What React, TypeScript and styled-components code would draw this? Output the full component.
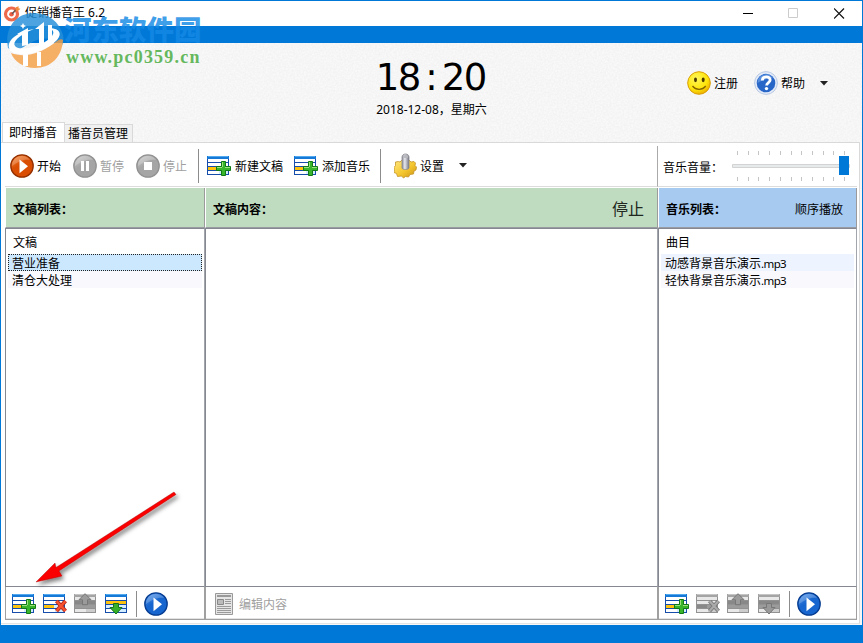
import React from "react";
import styled, { createGlobalStyle } from "styled-components";

const GlobalStyle = createGlobalStyle`
  * { box-sizing: border-box; }
  body { margin: 0; overflow: hidden; }
  svg { display: block; flex: none; }
`;

const noise =
  "url(\"data:image/svg+xml,%3Csvg xmlns='http://www.w3.org/2000/svg' width='200' height='100'%3E%3Cfilter id='n'%3E%3CfeTurbulence type='fractalNoise' baseFrequency='0.55' numOctaves='2' stitchTiles='stitch'/%3E%3CfeColorMatrix values='0 0 0 0 0.5 0 0 0 0 0.5 0 0 0 0 0.5 0.22 0 0 0 -0.06'/%3E%3C/filter%3E%3Crect width='200' height='100' filter='url(%23n)'/%3E%3C/svg%3E\")";

const Window = styled.div`
  position: relative;
  width: 863px;
  height: 643px;
  display: flex;
  flex-direction: column;
  border: 1px solid #0078d7;
  border-bottom: 0;
  background: #0078d7;
  color: #000;
  font: 12px/16px "Noto Sans", "Noto Sans CJK SC", sans-serif;
  white-space: nowrap;
  overflow: hidden;
`;
const TitleBar = styled.div`
  height: 25px;
  flex: none;
  display: flex;
  align-items: center;
  background: #fff;
  padding-left: 2px;
`;
const TitleText = styled.span`
  flex: 1;
  margin: -1px 0 0 4px;
`;
const Controls = styled.div`
  display: flex;
  gap: 35px;
  margin-right: 17px;
`;
const Band = styled.div`
  height: 17px;
  flex: none;
`;
const Header = styled.div`
  height: 99px;
  flex: none;
  display: grid;
  grid-template-columns: 1fr 114px 1fr;
  background: #f9f9f9 ${noise};
`;
const TabStrip = styled.div`
  display: flex;
  align-items: flex-end;
  padding-left: 1px;
`;
const Tab = styled.div<{ $active?: boolean }>`
  width: ${(p) => (p.$active ? 63 : 68)}px;
  height: ${(p) => (p.$active ? 20 : 18)}px;
  padding: ${(p) => (p.$active ? "2px 0 0 6px" : "1px 0 0 3px")};
  border: 1px solid #d9d9d9;
  border-bottom: 0;
  border-left-width: ${(p) => (p.$active ? 1 : 0)}px;
  background: ${(p) => (p.$active ? "#fff" : "#f0f0f0")};
`;
const Clock = styled.div`
  padding-top: 10px;
  text-align: center;
`;
const Digits = styled.div`
  display: flex;
  justify-content: center;
  font: 37px/49px "DejaVu Sans", sans-serif;
`;
const Digit = styled.span`
  width: 22px;
  display: flex;
  justify-content: center;
`;
const HeaderActions = styled.div`
  display: flex;
  align-items: center;
  justify-content: flex-end;
  height: 80px;
  padding-right: 34px;
`;
const Action = styled.div<{ $disabled?: boolean; $gap?: number; $after?: number }>`
  display: flex;
  align-items: center;
  gap: ${(p) => p.$gap ?? 3}px;
  margin-right: ${(p) => p.$after ?? 12}px;
  color: ${(p) => (p.$disabled ? "#a0a0a0" : "#000")};
`;
const Label = styled.span`
  padding-top: 2px;
`;
const PageFrame = styled.div`
  background: #f7f7f7;
  height: 483px;
  flex: none;
`;
const Page = styled.div`
  height: 482px;
  display: grid;
  grid-template-columns: 200px 453px 199px;
  grid-template-rows: 45px 40px 359px 33px;
  padding-left: 4px;
  margin-right: 2px;
  border-top: 1px solid #d9d9d9;
  border-right: 1px solid #d9d9d9;
  border-bottom: 1px solid #e4e4e4;
  background: #fff;
`;
const Toolbar = styled.div`
  grid-column: 1 / 3;
  display: flex;
  align-items: center;
  padding: 2px 0 0 5px;
  border-bottom: 1px solid #dcdcdc;
  margin-bottom: 1px;
`;
const Separator = styled.i<{ $height: number; $after: number }>`
  width: 1px;
  height: ${(p) => p.$height}px;
  margin-right: ${(p) => p.$after}px;
  background: #8c8c8c;
`;
const Volume = styled.div`
  display: flex;
  align-items: center;
  border-left: 1px solid #aaa;
  margin: 3px 0 1px -1px;
  border-bottom: 1px solid #dcdcdc;
  padding-left: 5px;
`;
const VolumeLabel = styled.span`
  width: 69px;
  padding-top: 3px;
`;
const PanelHead = styled.div<{ $tone: string }>`
  display: flex;
  align-items: center;
  justify-content: space-between;
  padding: 4px 13px 0 7px;
  background: ${(p) => p.$tone};
  border-right: 1px solid #9b9b9b;
  border-left: 1px solid #fff;
  border-bottom: 1px solid #999ba2;
`;
const State = styled.span`
  font-size: 16px;
  line-height: 20px;
  margin-top: -2px;
  color: #202820;
`;
const Panel = styled.div`
  border: 1px solid #858891;
  border-right-color: #a3a5ad;
  background: #fff;
  padding: 5px 2px 0 2px;
`;
const ColumnTitle = styled.div`
  height: 20px;
  padding: 1px 0 0 5px;
`;
const ListRow = styled.div<{ $selected?: boolean; $tint: string }>`
  height: 17px;
  line-height: 19px;
  padding-left: 4px;
  background: ${(p) => p.$tint};
  outline: ${(p) => (p.$selected ? "1px dotted #222" : "none")};
  outline-offset: -1px;
`;
const Extension = styled.span`
  font-size: 11.5px;
  letter-spacing: -0.6px;
`;
const Footer = styled.div`
  display: flex;
  align-items: center;
  padding: 1px 0 0 6px;
  border: 1px solid #a0a0a0;
  border-top: 0;
  box-shadow: inset 0 -1px #e3e3e3;
`;
const FooterIcon = styled.div`
  width: 31px;
`;
const FooterDoc = styled.div`
  padding-left: 3px;
`;
const Watermark = styled.div`
  position: absolute;
  left: 4px;
  top: 9px;
  width: 200px;
  height: 62px;
`;
const WatermarkName = styled.div`
  position: absolute;
  left: 59px;
  top: 2px;
  font: 900 27.5px/32px "Noto Sans CJK SC", sans-serif;
  color: rgba(20, 137, 229, 0.82);
`;
const WatermarkUrl = styled.div`
  position: absolute;
  left: 61px;
  top: 36px;
  font: bold 18px/22px "Liberation Serif", serif;
  letter-spacing: 1.2px;
  color: #65b85d;
`;
const Arrow = styled.svg`
  position: absolute;
  left: 28px;
  top: 484px;
`;

function AppIcon() {
  return (
    <svg width="18" height="18" viewBox="0 0 18 18">
      <circle cx="8.5" cy="9" r="6" fill="#fff" stroke="#ed6a4d" strokeWidth="3.2" />
      <circle cx="8.5" cy="9.2" r="2.3" fill="#ed5c42" />
      <path d="M9 9 14 3.5" stroke="#6b5450" strokeWidth="1.6" />
      <path d="m12.7 2.3 3.1-1-.4 2 2 .5-2.7 2.5-2.4-1Z" fill="#f18a3b" />
    </svg>
  );
}

function ListIcon({ mode, gray }: { mode: "plus" | "cross" | "up" | "down"; gray?: boolean }) {
  const edge = gray ? "#929292" : "#174daa";
  const accent = gray ? "#888" : "#ffc20d";
  const upDown = mode === "up" || mode === "down";
  return (
    <svg width="25" height="22" viewBox="0 0 25 22">
      <path d="M0 1h22v19H0z" fill={edge} />
      <path d="M0 1h22v3H0z" fill={gray ? "#a4a4a4" : "#1679d8"} />
      <path d="M1 1h20v1H1z" fill={gray ? "#c5c5c5" : "#53a9ee"} />
      <path d="M1 4h20v3H1zM1 8h20v3H1zM1 16h20v3H1z" fill={gray ? "#e8e8e8" : "#fff"} />
      <path d="M1 12h20v3H1z" fill={gray ? "#9b9b9b" : "#d9efff"} />
      {upDown ? <path d="M1 8h20v3H1z" fill={accent} /> : <path d="M1 12h10v3H1z" fill={accent} />}
      <path d="M12 16h9v3h-9z" fill={gray ? "#ccc" : "#d1edff"} />
      {mode === "plus" && (
        <>
          <path d="M14.5 6.5h4v5h5v4h-5v5h-4v-5h-5v-4h5z" fill="#39b52c" stroke="#127a14" />
          <path d="M15 7h1v5h-6v1h5zM18 12h5v1h-5z" fill="#9be07c" />
        </>
      )}
      {mode === "cross" && (
        <>
          <path d="m13.5 8 9 10m0-10-9 10" stroke={gray ? "#777" : "#b52518"} strokeWidth="4" />
          <path d="m13.5 8 9 10m0-10-9 10" stroke={gray ? "#aaa" : "#f7532f"} strokeWidth="2.2" />
        </>
      )}
      {mode === "up" && <path d="m11 .7 6 6h-3.5v5h-5v-5H5z" fill="#9b9b9b" stroke="#777" />}
      {mode === "down" && (
        <path d="M8.500 10.500h5v4H17l-6 6.500-6-6.500h3.500z" fill={gray ? "#999" : "#35af27"} stroke={gray ? "#777" : "#16741b"} />
      )}
    </svg>
  );
}

type Glyph = "play" | "pause" | "stop";
function RoundIcon({ glyph, tone }: { glyph: Glyph; tone: "orange" | "gray" | "blue" }) {
  const c = {
    orange: ["#ff9646", "#d94e03", "#943000"],
    gray: ["#cfcfcf", "#a5a5a5", "#929292"],
    blue: ["#5e9ff0", "#1765ce", "#073d91"],
  }[tone];
  const id = `round-${tone}-${glyph}`;
  return (
    <svg width="24" height="24" viewBox="0 0 24 24">
      <defs>
        <linearGradient id={id} x1="0" y1="0" x2=".6" y2="1">
          <stop stopColor={c[0]} />
          <stop offset=".5" stopColor={c[1]} />
          <stop offset="1" stopColor={c[1]} />
        </linearGradient>
      </defs>
      <circle cx="12" cy="12" r="11.2" fill={`url(#${id})`} stroke={c[2]} strokeWidth="1.3" />
      <path d="M2 12C2 6 6 2 12 2c4 0 7 2 8 4C13 5 8 8 2 12" fill="#fff" opacity=".22" />
      {glyph === "play" && <path d="M9.5 5.5 18 12.2l-8.5 7z" fill="#fff" />}
      {glyph === "pause" && <path d="M8 7h3v10H8zm5 0h3v10h-3z" fill="#fff" />}
      {glyph === "stop" && <path d="M8 8h8v8H8z" fill="#fff" />}
    </svg>
  );
}

function SmileIcon() {
  return (
    <svg width="24" height="24" viewBox="0 0 24 24">
      <defs>
        <radialGradient id="smile" cx=".38" cy=".3" r=".75">
          <stop stopColor="#fff65a" />
          <stop offset=".65" stopColor="#ffe50a" />
          <stop offset="1" stopColor="#e9a900" />
        </radialGradient>
      </defs>
      <circle cx="12" cy="12" r="11.3" fill="url(#smile)" stroke="#d99d07" />
      <ellipse cx="8.5" cy="8.8" rx="1.5" ry="2.4" fill="#4c3a00" />
      <ellipse cx="16.2" cy="8.8" rx="1.5" ry="2.4" fill="#4c3a00" />
      <path d="M5.5 15c3.3 4.4 10 4.4 13.2 0" fill="none" stroke="#856400" strokeWidth="1.3" />
    </svg>
  );
}

function HelpIcon() {
  return (
    <svg width="24" height="24" viewBox="0 0 24 24">
      <circle cx="12" cy="12" r="11.4" fill="#e3ebf8" stroke="#b9c9e4" />
      <circle cx="12" cy="12" r="9.3" fill="#2866c7" />
      <path d="M3.5 12A8.5 8.5 0 0 1 19 7C14 7 8 9 3.5 12" fill="#77a9eb" opacity=".6" />
      <path d="M8.4 9.4c0-4.8 7.8-4.4 7.8-.4 0 2.5-3.6 2.6-3.6 5.4" fill="none" stroke="#fff" strokeWidth="2.8" />
      <circle cx="12.5" cy="17.6" r="1.7" fill="#fff" />
    </svg>
  );
}

function SettingsIcon() {
  return (
    <svg width="23" height="26" viewBox="0 0 23 26">
      <defs>
        <linearGradient id="gear" x2="1" y2="1">
          <stop stopColor="#ffe880" />
          <stop offset=".55" stopColor="#f4c62e" />
          <stop offset="1" stopColor="#c98f12" />
        </linearGradient>
        <linearGradient id="pin">
          <stop stopColor="#8b8b94" />
          <stop offset=".4" stopColor="#e7e7ee" />
          <stop offset="1" stopColor="#777783" />
        </linearGradient>
      </defs>
      <path
        d="m1.5 9 3-.5L6 9l2-2h7l2 2 3-.5 1.5 1.5-.5 2.500 1.500 1.500-.5 3-2 1-.5 3-3.500.5-1.500 2.500-3-.5-2 1.500-2-2-4 .5-1-3-2.500-1 .5-3-.5-2 1.500-2z"
        fill="url(#gear)"
        stroke="#c3932a"
        strokeWidth=".8"
      />
      <path d="M8 4c0-4 7-4 7 0v11c-1 2-6 2-7 0z" fill="url(#pin)" stroke="#888891" strokeWidth=".8" />
      <ellipse cx="11.5" cy="3.5" rx="2.8" ry="1.5" fill="#b8b8bf" />
    </svg>
  );
}

function Caret() {
  return (
    <svg width="8" height="5" viewBox="0 0 8 5">
      <path d="M0 0h8L4 4.5z" fill="#222" />
    </svg>
  );
}

function DocumentIcon() {
  return (
    <svg width="18" height="22" viewBox="0 0 18 22">
      <path d="M.5.5h17v21H.5z" fill="#e5e5e5" stroke="#999" />
      <path d="M2 2h14v2H2z" fill="#999" />
      <path d="M2.5 6.5h6v5h-6z" fill="#bbb" stroke="#888" />
      <path d="M10 6.5h6m-6 2h6m-6 2h6M2 13.5h14m-14 2h14m-14 2h14m-14 2h14" stroke="#9a9a9a" />
    </svg>
  );
}

function VolumeSlider() {
  return (
    <svg width="119" height="32" viewBox="0 0 119 32">
      <path d="M.5 14.5h117v3H.5z" fill="#e7eaea" stroke="#d3d3d3" />
      {Array.from({ length: 11 }, (_, i) => {
        const x = Math.round(5 + i * 10.7) + 0.5;
        return <path key={i} d={`M${x} 1v4M${x} 27v4`} stroke="#c4c4c4" />;
      })}
      <path d="M107 6h10v19h-10z" fill="#0078d7" />
    </svg>
  );
}

function WindowControls() {
  return (
    <Controls>
      <svg width="11" height="11" viewBox="0 0 11 11">
        <path d="M1 5.5h10" stroke="#000" />
      </svg>
      <svg width="11" height="11" viewBox="0 0 11 11">
        <path d="M.5.5h9v9h-9z" fill="none" stroke="#ccc" />
      </svg>
      <svg width="11" height="11" viewBox="0 0 11 11">
        <path d="m0 .5 10 10m0-10-10 10" stroke="#111" strokeWidth="1.2" />
      </svg>
    </Controls>
  );
}

function SiteMark() {
  return (
    <Watermark>
      <svg width="60" height="60" viewBox="0 0 60 60">
        <g opacity=".82">
          <path d="M3 38C-1 18 11 3 29 3c15 0 25 9 29 22 2 9-2 14-10 19C52 32 47 27 36 29 22 31 15 45 3 38" fill="#258fd9" />
          <path d="M6 43c13 5 28 1 42-9 5-4 8-6 10-4-1 17-12 28-28 28-12 0-21-7-24-15" fill="#f6a146" />
        </g>
        <path d="M4 38C2 29 15 21 29 19 14 25 7 32 10 36c5 6 25 1 34-7 6-5 6-9-1-11 11 0 15 5 9 12C40 43 8 50 4 38" fill="#fff" />
        <path d="m12 24 11-6v17l-6 1V24zM30 19l9-7v23l-5 2V19zM43 15h4v17l-4 2z" fill="#fff" />
        <path d="M18 44h5v12h-5zM32 42h4v14h-4z" fill="#fff" />
        <path d="m18 13 1 2 2 1-2 1-1 2-1-2-2-1 2-1z" fill="#fff" />
      </svg>
      <WatermarkName>河东软件园</WatermarkName>
      <WatermarkUrl>www.pc0359.cn</WatermarkUrl>
    </Watermark>
  );
}

export default function App() {
  return (
    <Window>
      <GlobalStyle />
      <TitleBar>
        <AppIcon />
        <TitleText>促销播音王 6.2</TitleText>
        <WindowControls />
      </TitleBar>
      <Band />
      <Header>
        <TabStrip>
          <Tab $active>即时播音</Tab>
          <Tab>播音员管理</Tab>
        </TabStrip>
        <Clock>
          <Digits>
            {"18:20".split("").map((c, i) => (
              <Digit key={i}>{c}</Digit>
            ))}
          </Digits>
          2018-12-08，星期六
        </Clock>
        <HeaderActions>
          <Action $after={16}><SmileIcon /><Label>注册</Label></Action>
          <Action $after={15}><HelpIcon /><Label>帮助</Label></Action>
          <Caret />
        </HeaderActions>
      </Header>
      <PageFrame>
        <Page>
          <Toolbar>
            <Action><RoundIcon glyph="play" tone="orange" /><Label>开始</Label></Action>
            <Action $disabled><RoundIcon glyph="pause" tone="gray" /><Label>暂停</Label></Action>
            <Action $disabled $after={11}><RoundIcon glyph="stop" tone="gray" /><Label>停止</Label></Action>
            <Separator $height={34} $after={8} />
            <Action $after={11}><ListIcon mode="plus" /><Label>新建文稿</Label></Action>
            <Action $after={10}><ListIcon mode="plus" /><Label>添加音乐</Label></Action>
            <Separator $height={34} $after={13} />
            <Action $after={15}><SettingsIcon /><Label>设置</Label></Action>
            <Caret />
          </Toolbar>
          <Volume>
            <VolumeLabel>音乐音量：</VolumeLabel>
            <VolumeSlider />
          </Volume>

          <PanelHead $tone="#c0dcc0"><b>文稿列表：</b></PanelHead>
          <PanelHead $tone="#c0dcc0"><b>文稿内容：</b><State>停止</State></PanelHead>
          <PanelHead $tone="#a6caf0"><b>音乐列表：</b>顺序播放</PanelHead>

          <Panel>
            <ColumnTitle>文稿</ColumnTitle>
            <ListRow $selected $tint="#cce8ff">营业准备</ListRow>
            <ListRow $tint="#f9f9fd">清仓大处理</ListRow>
          </Panel>
          <Panel />
          <Panel>
            <ColumnTitle>曲目</ColumnTitle>
            <ListRow $tint="#edf4ff">动感背景音乐演示<Extension>.mp3</Extension></ListRow>
            <ListRow $tint="#f9f9fd">轻快背景音乐演示<Extension>.mp3</Extension></ListRow>
          </Panel>

          <Footer>
            <FooterIcon><ListIcon mode="plus" /></FooterIcon>
            <FooterIcon><ListIcon mode="cross" /></FooterIcon>
            <FooterIcon><ListIcon mode="up" gray /></FooterIcon>
            <FooterIcon><ListIcon mode="down" /></FooterIcon>
            <Separator $height={26} $after={7} />
            <RoundIcon glyph="play" tone="blue" />
          </Footer>
          <Footer>
            <Action $disabled $gap={6}><FooterDoc><DocumentIcon /></FooterDoc><Label>编辑内容</Label></Action>
          </Footer>
          <Footer>
            <FooterIcon><ListIcon mode="plus" /></FooterIcon>
            <FooterIcon><ListIcon mode="cross" gray /></FooterIcon>
            <FooterIcon><ListIcon mode="up" gray /></FooterIcon>
            <FooterIcon><ListIcon mode="down" gray /></FooterIcon>
            <Separator $height={26} $after={7} />
            <RoundIcon glyph="play" tone="blue" />
          </Footer>
        </Page>
      </PageFrame>
      <SiteMark />
      <Arrow width="155" height="105" viewBox="0 0 155 105">
        <defs>
          <filter id="shade" x="-10%" y="-10%" width="125%" height="125%">
            <feDropShadow dx="2" dy="3" stdDeviation="2" floodColor="#000" floodOpacity=".5" />
          </filter>
        </defs>
        <path d="M7 97 26 78l1 4.5L145 7l2 2.5L30 86l3 5z" fill="#fa0000" stroke="#a40000" strokeWidth=".4" filter="url(#shade)" />
      </Arrow>
    </Window>
  );
}
